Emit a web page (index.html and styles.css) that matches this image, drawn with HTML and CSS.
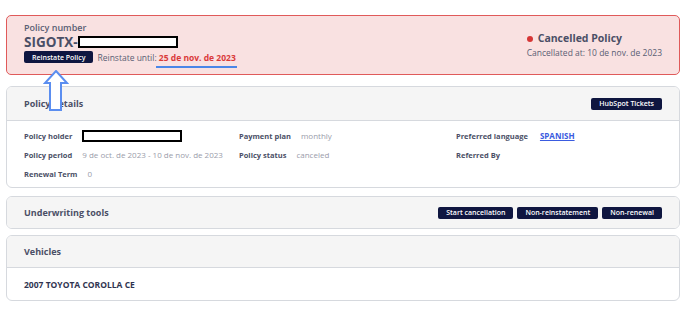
FILE: index.html
```html
<!DOCTYPE html>
<html lang="en">
<head>
    <meta charset="UTF-8">
    <meta name="viewport" content="width=device-width, initial-scale=1.0">
    <title>Policy</title>
    <link rel="stylesheet" href="styles.css">
</head>
<body>
    <main class="page">
        <section class="statusBox">
            <div class="statusLeft">
                <span class="smallLabel">Policy number</span>
                <div class="policyNumber">SIGOTX-<span class="redacted redactedTitle"></span></div>
                <div class="reinstateRow">
                    <button class="btn">Reinstate Policy</button>
                    <span class="reinstateText">Reinstate until: <b class="dateRed">25 de nov. de 2023</b></span>
                </div>
            </div>
            <div class="statusRight">
                <div class="statusTitle"><span class="dot"></span>Cancelled Policy</div>
                <div class="statusSub">Cancellated at: 10 de nov. de 2023</div>
            </div>
            <!-- annotations -->
            <span class="markLine"></span>
            <svg class="arrow" width="26" height="42" viewBox="0 0 26 42">
                <path d="M13 1 L24 13 L18 13 L18 40 L7 40 L7 13 L2 13 Z" fill="#fff" stroke="#5b8ef0" stroke-width="2" stroke-linejoin="miter"/>
            </svg>
        </section>

        <section class="card cardDetails">
            <div class="cardHeader">
                <h3 class="cardTitle">Policy details</h3>
                <button class="btn">HubSpot Tickets</button>
            </div>
            <div class="cardBody detailsGrid">
                <div class="field"><span class="fieldLabel">Policy holder</span><span class="redacted redactedHolder"></span></div>
                <div class="field"><span class="fieldLabel">Payment plan</span><span class="fieldValue">monthly</span></div>
                <div class="field"><span class="fieldLabel">Preferred language</span><a class="fieldLink" href="#">SPANISH</a></div>

                <div class="field"><span class="fieldLabel">Policy period</span><span class="fieldValue">9 de oct. de 2023 - 10 de nov. de 2023</span></div>
                <div class="field"><span class="fieldLabel">Policy status</span><span class="fieldValue">canceled</span></div>
                <div class="field"><span class="fieldLabel">Referred By</span></div>

                <div class="field"><span class="fieldLabel">Renewal Term</span><span class="fieldValue">0</span></div>
            </div>
        </section>

        <section class="card cardTools">
            <div class="cardHeader">
                <h3 class="cardTitle">Underwriting tools</h3>
                <div class="btnGroup">
                    <button class="btn">Start cancellation</button>
                    <button class="btn">Non-reinstatement</button>
                    <button class="btn">Non-renewal</button>
                </div>
            </div>
        </section>

        <section class="card cardVehicles">
            <div class="cardHeader headerTall">
                <h3 class="cardTitle">Vehicles</h3>
            </div>
            <div class="cardBody">
                <span class="vehicle">2007 TOYOTA COROLLA CE</span>
            </div>
        </section>
    </main>
</body>
</html>
```

FILE: styles.css
```css
html, body {
  margin: 0;
  padding: 0;
  background: #fff;
  font-family: "Open Sans", "DejaVu Sans", sans-serif;
  color: #4b4f66;
}

.page {
  padding: 15px 8px 0 6px;
}

.btn {
  border: none;
  background: #0f1640;
  color: #fff;
  font-family: inherit;
  font-size: 7px;
  font-weight: 600;
  border-radius: 2px;
  height: 12px;
  padding: 0 8px;
  cursor: pointer;
  white-space: nowrap;
}

/* status */
.statusBox {
  position: relative;
  display: flex;
  justify-content: space-between;
  align-items: flex-start;
  height: 60px;
  box-sizing: border-box;
  border: 1px solid #e05a5a;
  border-radius: 5px;
  background: #f9e1e1;
  padding: 6px 17px 0 17px;
}

.smallLabel {
  display: block;
  font-size: 9px;
  font-weight: 600;
  line-height: 11px;
  color: #5a5e74;
}

.policyNumber {
  display: flex;
  align-items: center;
  font-size: 13.5px;
  font-weight: 700;
  line-height: 18px;
  color: #4b4f66;
}

.redacted {
  display: inline-block;
  box-sizing: border-box;
  border: 2px solid #000;
  background: #fff;
}

.redactedTitle {
  width: 100px;
  height: 12px;
}

.reinstateRow {
  display: flex;
  align-items: center;
  gap: 4px;
}

.reinstateText {
  font-size: 8.5px;
  color: #5a5e74;
}

.dateRed {
  color: #d93a3a;
  font-weight: 700;
}

.statusRight {
  padding-top: 9px;
}

.statusTitle {
  display: flex;
  align-items: center;
  font-size: 10.5px;
  font-weight: 700;
  line-height: 15px;
  color: #4b4f66;
}

.dot {
  width: 6px;
  height: 6px;
  border-radius: 50%;
  background: #d63535;
  margin-right: 5px;
}

.statusSub {
  font-size: 8.5px;
  font-weight: 500;
  color: #5a5e74;
  margin-top: 1px;
}

.markLine {
  position: absolute;
  left: 149px;
  top: 50px;
  width: 81px;
  height: 2px;
  background: #4a86e8;
}

.arrow {
  position: absolute;
  left: 36px;
  top: 54px;
  z-index: 2;
}

/* cards */
.card {
  border: 1px solid #d6d9de;
  border-radius: 6px;
  overflow: hidden;
  background: #fff;
}

.cardDetails { margin-top: 11px; }
.cardTools { margin-top: 8px; }
.cardVehicles { margin-top: 6px; }

.cardHeader {
  display: flex;
  justify-content: space-between;
  align-items: center;
  background: #f5f5f5;
  padding: 0 17px;
  height: 33px;
}

.headerTall {
  height: 31px;
  border-bottom: 1px solid #d6d9de;
}

.cardDetails .cardHeader {
  border-bottom: 1px solid #d6d9de;
}

.cardTools .cardHeader {
  height: 31px;
}

.cardTitle {
  margin: 0;
  font-size: 9px;
  font-weight: 700;
  color: #4b4f66;
}

.btnGroup {
  display: flex;
  gap: 4px;
}

.cardBody {
  padding: 0 17px;
}

.detailsGrid {
  display: grid;
  grid-template-columns: 215px 217px 1fr;
  grid-auto-rows: 19px;
  padding-top: 5px;
  padding-bottom: 4px;
}

.field {
  display: flex;
  align-items: center;
  font-size: 8px;
}

.fieldLabel {
  font-size: 7.5px;
  font-weight: 700;
  color: #4b4f66;
  margin-right: 10px;
}

.fieldValue {
  color: #9a9caa;
}

.fieldLink {
  color: #3a5be0;
  font-weight: 700;
  margin-left: 2px;
}

.redactedHolder {
  width: 100px;
  height: 12px;
}

.cardVehicles .cardBody {
  display: flex;
  align-items: center;
  height: 32px;
}

.vehicle {
  font-size: 8.5px;
  font-weight: 700;
  color: #2f3350;
}
```
